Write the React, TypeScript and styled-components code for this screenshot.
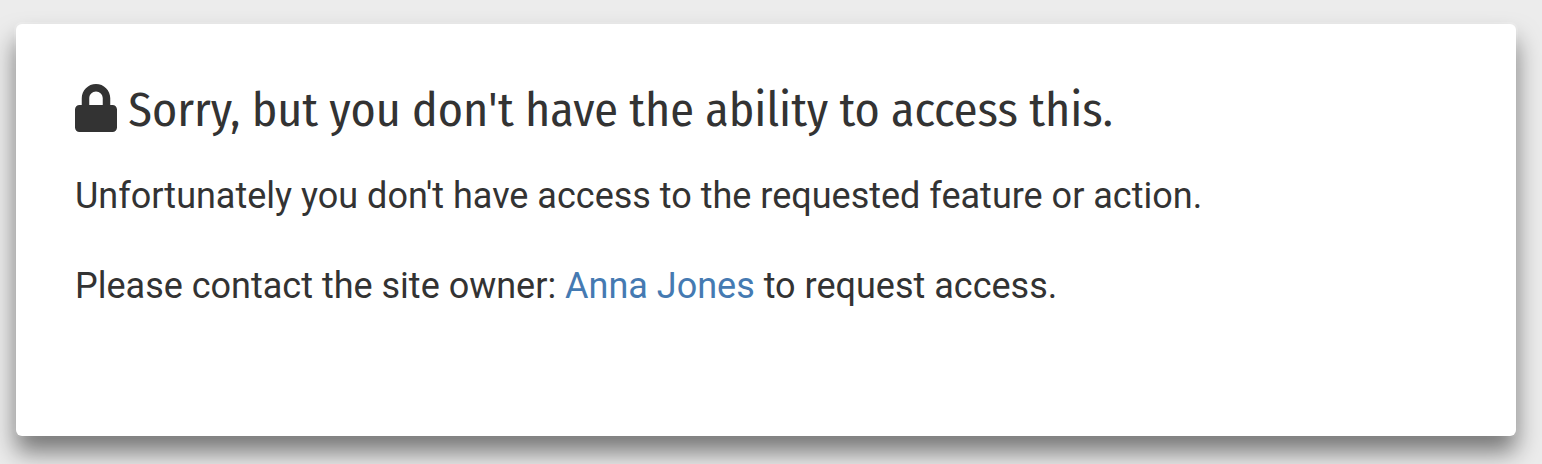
import React from "react";
import styled, { createGlobalStyle } from "styled-components";
import { FaLock } from "react-icons/fa";

const GlobalStyle = createGlobalStyle`
  * { box-sizing: border-box; }
  body {
    margin: 0;
    background: #ececec;
    color: #333;
    font-family: Roboto, "Liberation Sans", sans-serif;
  }
`;

const Page = styled.main`
  padding: 24px 26px 28px 16px;
`;

const Card = styled.section`
  padding: 56px 59px 128px;
  background: #fff;
  border-radius: 6px;
  box-shadow: 0 16px 24px rgba(0, 0, 0, 0.5), 0 0 0 2px #f0f0f0;
`;

const Title = styled.h1`
  margin: 0 0 34px;
  font-family: "Fira Sans Condensed", "Open Sans", sans-serif;
  font-size: 48px;
  font-weight: 400;
  line-height: 60px;
`;

const LockIcon = styled(FaLock)`
  width: 42px;
  height: 48px;
  vertical-align: -6px;
`;

const Message = styled.p`
  margin: 0 0 46px;
  font-size: 36px;
  line-height: 44px;

  &:last-child {
    margin-bottom: 0;
  }
`;

const OwnerLink = styled.a`
  color: #457ab2;
  text-decoration: none;
`;

export default function App() {
  return (
    <>
      <GlobalStyle />
      <Page>
        <Card>
          <Title>
            <LockIcon aria-hidden="true" /> Sorry, but you don't have the ability to access this.
          </Title>
          <Message>Unfortunately you don't have access to the requested feature or action.</Message>
          <Message>
            Please contact the site owner: <OwnerLink href="#owner">Anna Jones</OwnerLink> to request access.
          </Message>
        </Card>
      </Page>
    </>
  );
}
